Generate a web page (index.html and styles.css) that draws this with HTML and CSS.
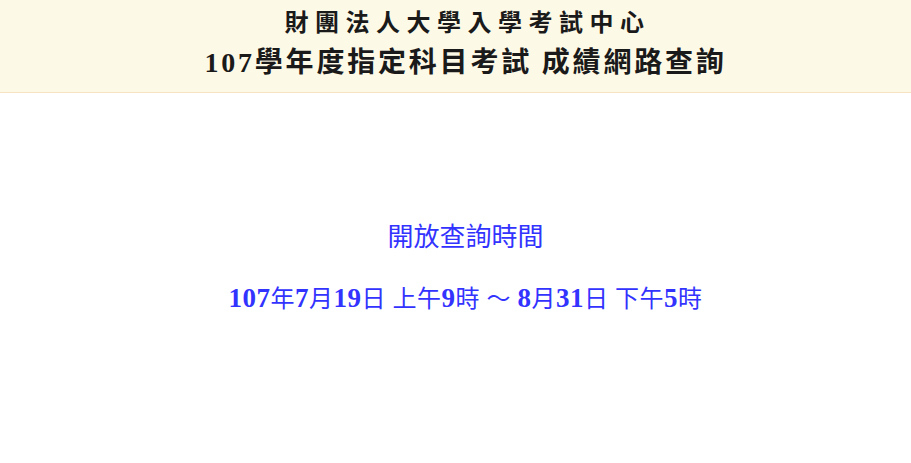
FILE: index.html
```html
<!DOCTYPE html>
<html lang="zh-Hant">
<head>
  <meta charset="UTF-8" />
  <meta name="viewport" content="width=device-width, initial-scale=1.0" />
  <title>107學年度指定科目考試 成績網路查詢</title>
  <link rel="stylesheet" href="styles.css">
</head>
<body>
  <div class="header">
    <h1 class="org">財團法人大學入學考試中心</h1>
    <h2 class="exam">107學年度指定科目考試 成績網路查詢</h2>
  </div>
  <div class="content">
    <p class="notice">開放查詢時間</p>
    <p class="period"><b>107</b>年<b>7</b>月<b>19</b>日 上午<b>9</b>時 ～ <b>8</b>月<b>31</b>日 下午<b>5</b>時</p>
  </div>
</body>
</html>
```

FILE: styles.css
```css
body {
  margin: 0;
  padding: 0;
  background: #ffffff;
  font-family: 'Liberation Serif', 'Noto Sans CJK TC', serif;
}
.header {
  height: 92px;
  background: #fdf9e7;
  border-bottom: 1px solid #f7e3c2;
  text-align: center;
  color: #1a1a1a;
}
.org {
  margin: 0;
  padding-top: 7px;
  padding-left: 24px;
  font-size: 24px;
  line-height: 32px;
  font-weight: bold;
  letter-spacing: 6.5px;
}
.exam {
  margin: 0;
  padding-top: 5px;
  padding-left: 20px;
  font-size: 28px;
  line-height: 38px;
  font-weight: bold;
  letter-spacing: 2.8px;
}
.content {
  text-align: center;
  color: #3333ff;
  padding-top: 127px;
  padding-left: 20px;
}
.notice {
  margin: 0;
  font-size: 26px;
  line-height: 36px;
}
.period {
  margin: 24px 0 0;
  font-size: 24px;
  line-height: 36px;
  letter-spacing: 0.5px;
}
.period b {
  font-size: 27px;
  font-weight: bold;
}
```
